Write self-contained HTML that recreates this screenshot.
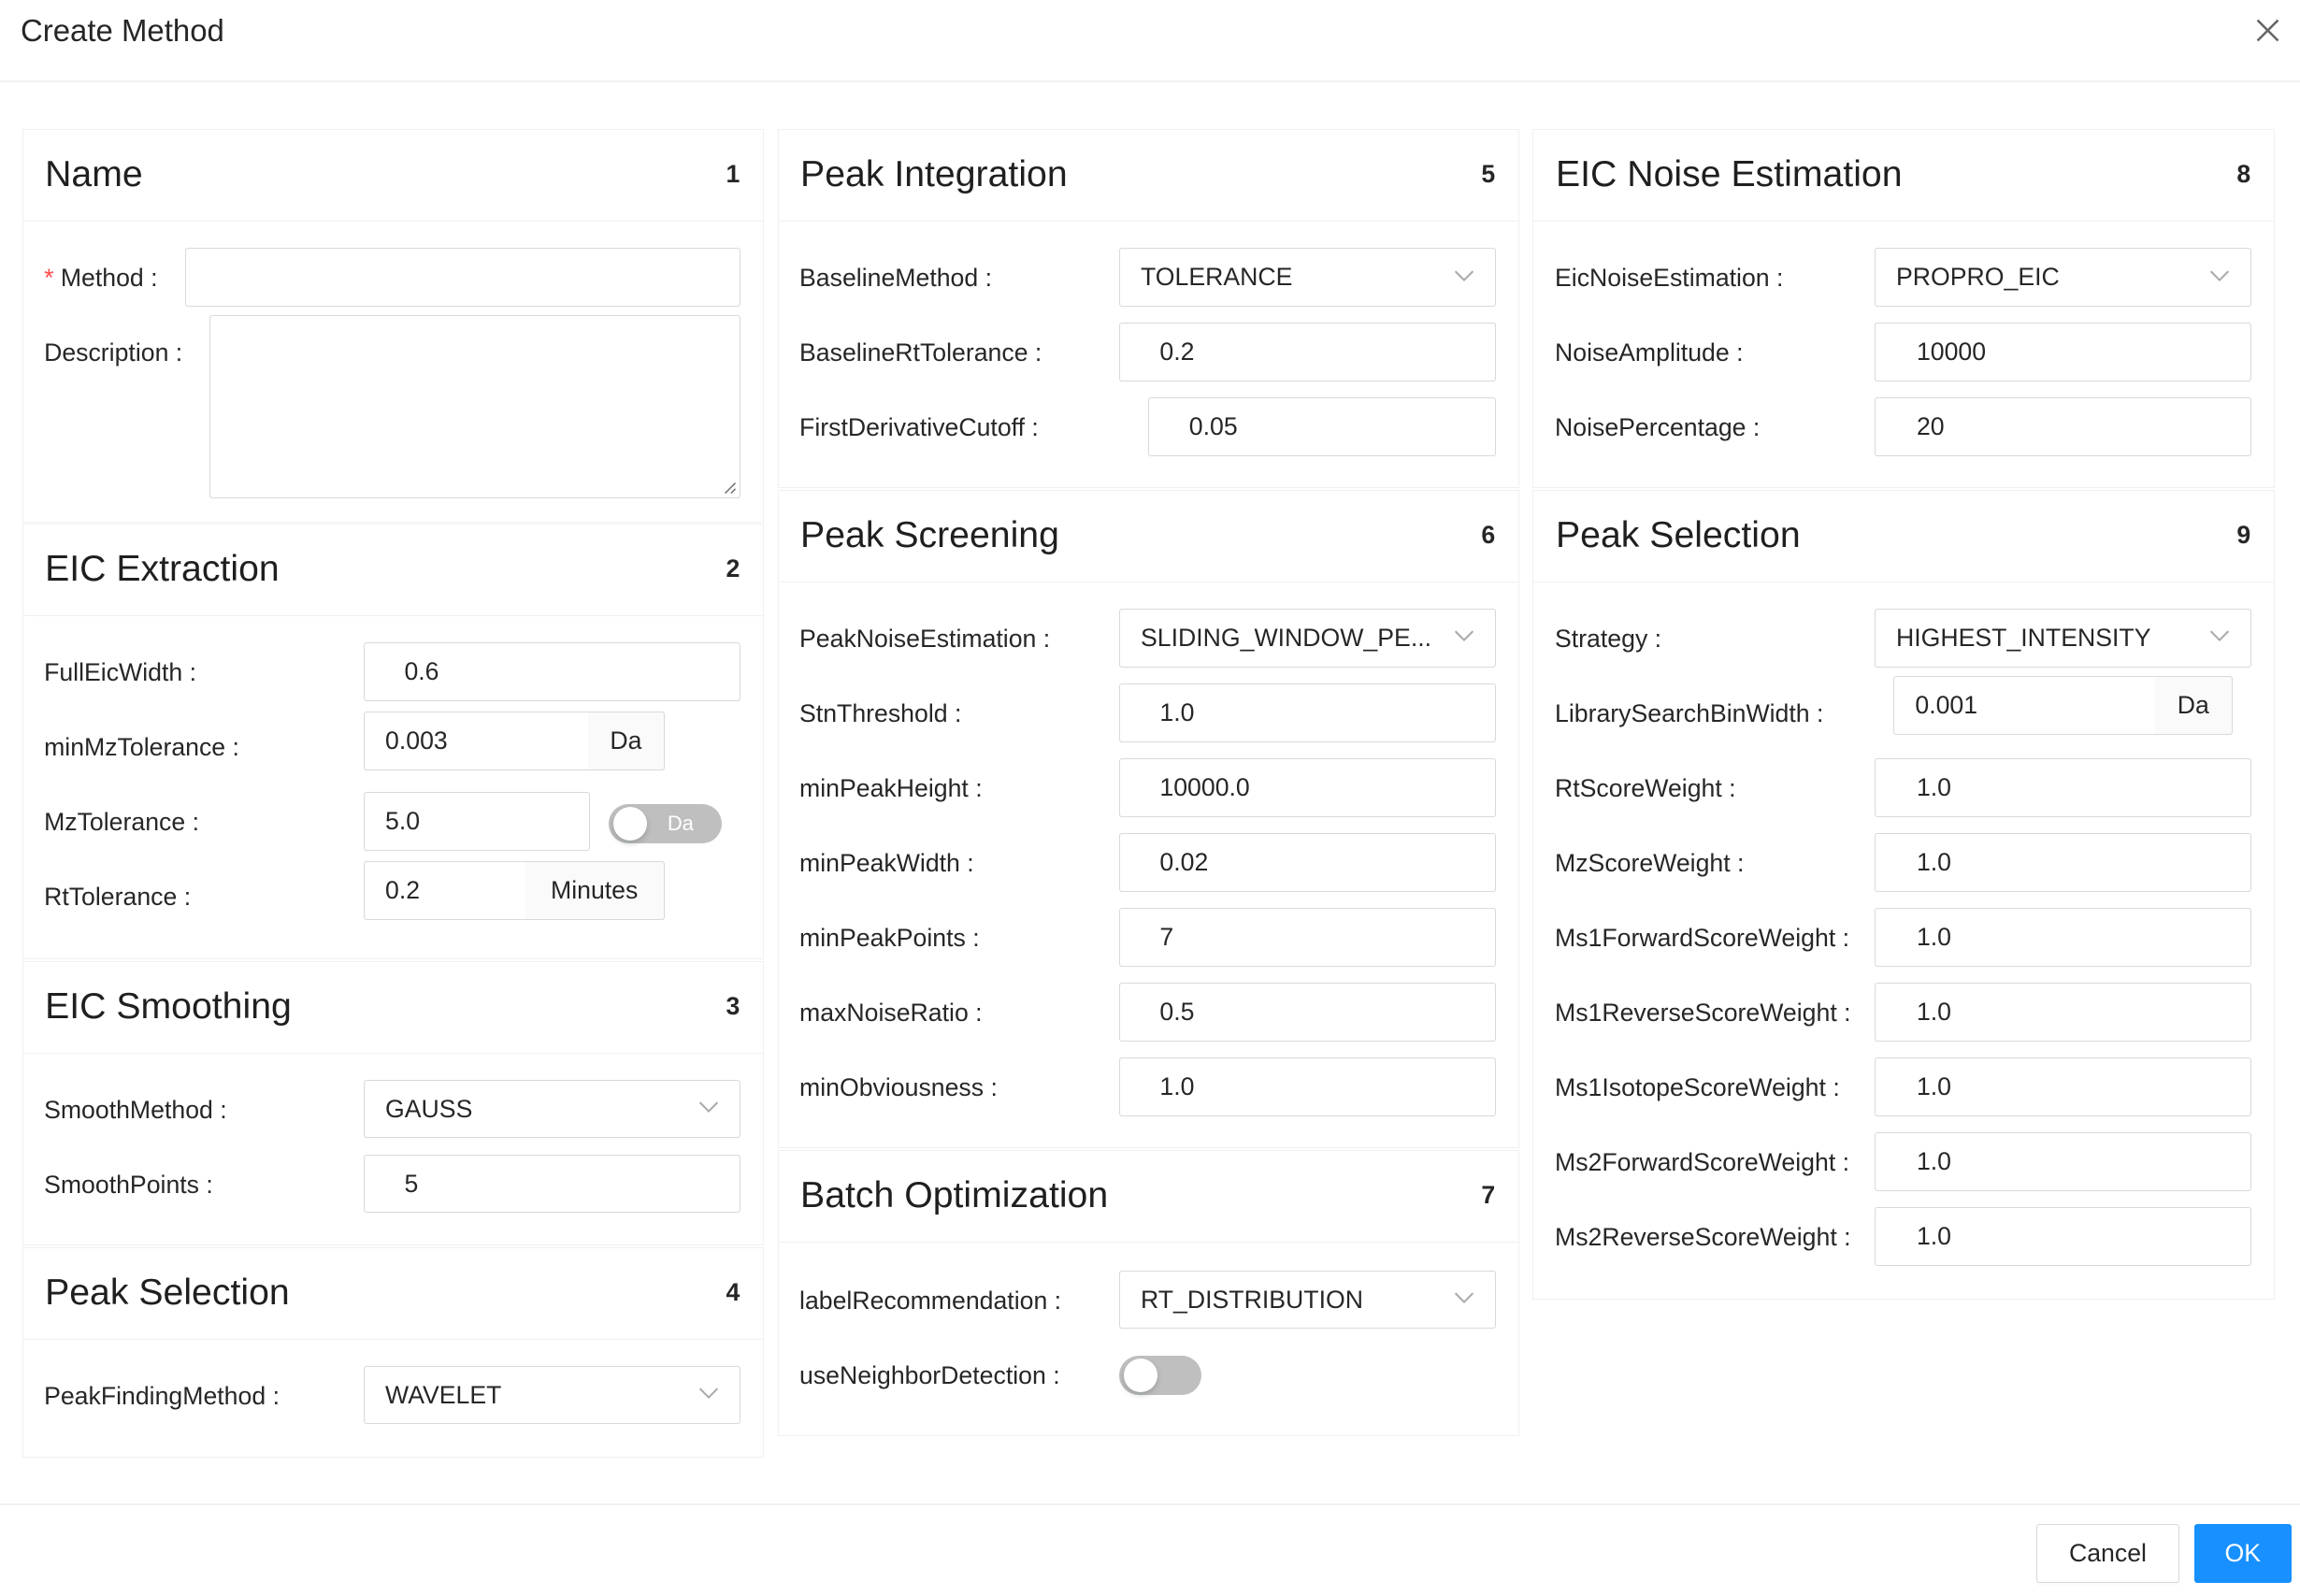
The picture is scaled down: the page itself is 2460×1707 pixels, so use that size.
<!DOCTYPE html>
<html><head><meta charset="utf-8">
<style>
html,body{margin:0;padding:0;background:#fff;}
body{width:2460px;height:1706px;overflow:hidden;}
#root{position:relative;width:1568px;height:1088px;zoom:1.56888;font-family:"Liberation Sans",Arial,sans-serif;color:rgba(0,0,0,.85);}
.a{position:absolute;}
.card{position:absolute;border:1px solid #f0f0f0;box-sizing:border-box;background:#fff;}
.ch{position:absolute;left:0;right:0;top:0;height:62px;border-bottom:1px solid #f0f0f0;}
.ct{position:absolute;left:15px;top:0;line-height:60px;font-size:25px;color:rgba(0,0,0,.88);}
.cn{position:absolute;right:16px;top:0;line-height:60px;font-size:17px;font-weight:bold;}
.lbl{position:absolute;font-size:17px;line-height:41px;white-space:nowrap;}
.in{position:absolute;height:40px;border:1px solid #d9d9d9;border-radius:2px;box-sizing:border-box;font-size:17px;line-height:39px;white-space:nowrap;overflow:hidden;background:#fff;}
.add{position:absolute;height:40px;border:1px solid #d9d9d9;border-left:none;border-radius:0 2px 2px 0;box-sizing:border-box;background:#fafafa;font-size:17px;line-height:39px;text-align:center;}
.sel svg{position:absolute;right:14px;top:13px;}
.btn{position:absolute;height:40px;box-sizing:border-box;border-radius:2px;font-size:17px;line-height:39px;text-align:center;}
</style></head><body><div id="root">

<div class="a" style="left:14px;top:0;line-height:42px;font-size:21px;">Create Method</div>
<svg class="a" style="left:1538px;top:13px" width="16" height="16" viewBox="0 0 16 16"><path d="M1 1L15 15M15 1L1 15" stroke="#666" stroke-width="1.6"/></svg>
<div class="a" style="left:0;right:0;top:55px;height:1px;background:#f0f0f0"></div>

<!-- Column 1 -->
<div class="card" style="left:15px;top:88px;width:506px;height:268px">
  <div class="ch"><div class="ct">Name</div><div class="cn">1</div></div>
</div>
<div class="lbl" style="left:30px;top:169px"><span style="color:#ff4d4f">* </span>Method :</div>
<div class="in" style="left:126px;top:169px;width:379px"></div>
<div class="lbl" style="left:30px;top:220px">Description :</div>
<div class="in" style="left:143px;top:215px;width:362px;height:125px"><svg class="a" style="right:2px;bottom:2px" width="9" height="9" viewBox="0 0 9 9"><path d="M8 1L1 8M8 5L5 8" stroke="#777" stroke-width="1"/></svg></div>

<div class="card" style="left:15px;top:357px;width:506px;height:297px">
  <div class="ch"><div class="ct">EIC Extraction</div><div class="cn">2</div></div>
</div>
<div class="lbl" style="left:30px;top:438px">FullEicWidth :</div>
<div class="in" style="left:248px;top:438px;width:257px;padding-left:27px">0.6</div>
<div class="lbl" style="left:30px;top:489px">minMzTolerance :</div>
<div class="in" style="left:248px;top:485px;width:154px;padding-left:14px;border-radius:2px 0 0 2px">0.003</div>
<div class="add" style="left:401px;top:485px;width:52px">Da</div>
<div class="lbl" style="left:30px;top:540px">MzTolerance :</div>
<div class="in" style="left:248px;top:540px;width:154px;padding-left:14px">5.0</div>
<div class="a" style="left:415px;top:548px;width:77px;height:27px;border-radius:14px;background:#bfbfbf">
  <div class="a" style="left:3px;top:2px;width:23px;height:23px;border-radius:50%;background:#fff;box-shadow:0 2px 4px rgba(0,35,11,.2)"></div>
  <div class="a" style="left:40px;top:0;line-height:27px;font-size:14px;color:#fff">Da</div>
</div>
<div class="lbl" style="left:30px;top:591px">RtTolerance :</div>
<div class="in" style="left:248px;top:587px;width:111px;padding-left:14px;border-radius:2px 0 0 2px">0.2</div>
<div class="add" style="left:358px;top:587px;width:95px">Minutes</div>

<div class="card" style="left:15px;top:655px;width:506px;height:194px">
  <div class="ch"><div class="ct">EIC Smoothing</div><div class="cn">3</div></div>
</div>
<div class="lbl" style="left:30px;top:736px">SmoothMethod :</div>
<div class="in sel" style="left:248px;top:736px;width:257px;padding-left:14px">GAUSS<svg width="14" height="10" viewBox="0 0 14 10"><path d="M1 2L7 8L13 2" stroke="#aaa" stroke-width="1.3" fill="none"/></svg></div>
<div class="lbl" style="left:30px;top:787px">SmoothPoints :</div>
<div class="in" style="left:248px;top:787px;width:257px;padding-left:27px">5</div>

<div class="card" style="left:15px;top:850px;width:506px;height:144px">
  <div class="ch"><div class="ct">Peak Selection</div><div class="cn">4</div></div>
</div>
<div class="lbl" style="left:30px;top:931px">PeakFindingMethod :</div>
<div class="in sel" style="left:248px;top:931px;width:257px;padding-left:14px">WAVELET<svg width="14" height="10" viewBox="0 0 14 10"><path d="M1 2L7 8L13 2" stroke="#aaa" stroke-width="1.3" fill="none"/></svg></div>

<!-- Column 2 -->
<div class="card" style="left:530px;top:88px;width:506px;height:245px">
  <div class="ch"><div class="ct">Peak Integration</div><div class="cn">5</div></div>
</div>
<div class="lbl" style="left:545px;top:169px">BaselineMethod :</div>
<div class="in sel" style="left:763px;top:169px;width:257px;padding-left:14px">TOLERANCE<svg width="14" height="10" viewBox="0 0 14 10"><path d="M1 2L7 8L13 2" stroke="#aaa" stroke-width="1.3" fill="none"/></svg></div>
<div class="lbl" style="left:545px;top:220px">BaselineRtTolerance :</div>
<div class="in" style="left:763px;top:220px;width:257px;padding-left:27px">0.2</div>
<div class="lbl" style="left:545px;top:271px">FirstDerivativeCutoff :</div>
<div class="in" style="left:783px;top:271px;width:237px;padding-left:27px">0.05</div>

<div class="card" style="left:530px;top:334px;width:506px;height:449px">
  <div class="ch"><div class="ct">Peak Screening</div><div class="cn">6</div></div>
</div>
<div class="lbl" style="left:545px;top:415px">PeakNoiseEstimation :</div>
<div class="in sel" style="left:763px;top:415px;width:257px;padding-left:14px">SLIDING_WINDOW_PE...<svg width="14" height="10" viewBox="0 0 14 10"><path d="M1 2L7 8L13 2" stroke="#aaa" stroke-width="1.3" fill="none"/></svg></div>
<div class="lbl" style="left:545px;top:466px">StnThreshold :</div>
<div class="in" style="left:763px;top:466px;width:257px;padding-left:27px">1.0</div>
<div class="lbl" style="left:545px;top:517px">minPeakHeight :</div>
<div class="in" style="left:763px;top:517px;width:257px;padding-left:27px">10000.0</div>
<div class="lbl" style="left:545px;top:568px">minPeakWidth :</div>
<div class="in" style="left:763px;top:568px;width:257px;padding-left:27px">0.02</div>
<div class="lbl" style="left:545px;top:619px">minPeakPoints :</div>
<div class="in" style="left:763px;top:619px;width:257px;padding-left:27px">7</div>
<div class="lbl" style="left:545px;top:670px">maxNoiseRatio :</div>
<div class="in" style="left:763px;top:670px;width:257px;padding-left:27px">0.5</div>
<div class="lbl" style="left:545px;top:721px">minObviousness :</div>
<div class="in" style="left:763px;top:721px;width:257px;padding-left:27px">1.0</div>

<div class="card" style="left:530px;top:784px;width:506px;height:195px">
  <div class="ch"><div class="ct">Batch Optimization</div><div class="cn">7</div></div>
</div>
<div class="lbl" style="left:545px;top:866px">labelRecommendation :</div>
<div class="in sel" style="left:763px;top:866px;width:257px;padding-left:14px">RT_DISTRIBUTION<svg width="14" height="10" viewBox="0 0 14 10"><path d="M1 2L7 8L13 2" stroke="#aaa" stroke-width="1.3" fill="none"/></svg></div>
<div class="lbl" style="left:545px;top:917px">useNeighborDetection :</div>
<div class="a" style="left:763px;top:924px;width:56px;height:27px;border-radius:14px;background:#bfbfbf">
  <div class="a" style="left:3px;top:2px;width:23px;height:23px;border-radius:50%;background:#fff;box-shadow:0 2px 4px rgba(0,35,11,.2)"></div>
</div>

<!-- Column 3 -->
<div class="card" style="left:1045px;top:88px;width:506px;height:245px">
  <div class="ch"><div class="ct">EIC Noise Estimation</div><div class="cn">8</div></div>
</div>
<div class="lbl" style="left:1060px;top:169px">EicNoiseEstimation :</div>
<div class="in sel" style="left:1278px;top:169px;width:257px;padding-left:14px">PROPRO_EIC<svg width="14" height="10" viewBox="0 0 14 10"><path d="M1 2L7 8L13 2" stroke="#aaa" stroke-width="1.3" fill="none"/></svg></div>
<div class="lbl" style="left:1060px;top:220px">NoiseAmplitude :</div>
<div class="in" style="left:1278px;top:220px;width:257px;padding-left:28px">10000</div>
<div class="lbl" style="left:1060px;top:271px">NoisePercentage :</div>
<div class="in" style="left:1278px;top:271px;width:257px;padding-left:28px">20</div>

<div class="card" style="left:1045px;top:334px;width:506px;height:552px">
  <div class="ch"><div class="ct">Peak Selection</div><div class="cn">9</div></div>
</div>
<div class="lbl" style="left:1060px;top:415px">Strategy :</div>
<div class="in sel" style="left:1278px;top:415px;width:257px;padding-left:14px">HIGHEST_INTENSITY<svg width="14" height="10" viewBox="0 0 14 10"><path d="M1 2L7 8L13 2" stroke="#aaa" stroke-width="1.3" fill="none"/></svg></div>
<div class="lbl" style="left:1060px;top:466px">LibrarySearchBinWidth :</div>
<div class="in" style="left:1291px;top:461px;width:179px;padding-left:14px;border-radius:2px 0 0 2px">0.001</div>
<div class="add" style="left:1469px;top:461px;width:53px">Da</div>
<div class="lbl" style="left:1060px;top:517px">RtScoreWeight :</div>
<div class="in" style="left:1278px;top:517px;width:257px;padding-left:28px">1.0</div>
<div class="lbl" style="left:1060px;top:568px">MzScoreWeight :</div>
<div class="in" style="left:1278px;top:568px;width:257px;padding-left:28px">1.0</div>
<div class="lbl" style="left:1060px;top:619px">Ms1ForwardScoreWeight :</div>
<div class="in" style="left:1278px;top:619px;width:257px;padding-left:28px">1.0</div>
<div class="lbl" style="left:1060px;top:670px">Ms1ReverseScoreWeight :</div>
<div class="in" style="left:1278px;top:670px;width:257px;padding-left:28px">1.0</div>
<div class="lbl" style="left:1060px;top:721px">Ms1IsotopeScoreWeight :</div>
<div class="in" style="left:1278px;top:721px;width:257px;padding-left:28px">1.0</div>
<div class="lbl" style="left:1060px;top:772px">Ms2ForwardScoreWeight :</div>
<div class="in" style="left:1278px;top:772px;width:257px;padding-left:28px">1.0</div>
<div class="lbl" style="left:1060px;top:823px">Ms2ReverseScoreWeight :</div>
<div class="in" style="left:1278px;top:823px;width:257px;padding-left:28px">1.0</div>

<!-- Footer -->
<div class="a" style="left:0;right:0;top:1025px;height:1px;background:#f0f0f0"></div>
<div class="btn" style="left:1388px;top:1039px;width:98px;border:1px solid #d9d9d9;background:#fff;box-shadow:0 2px 0 rgba(0,0,0,.016)">Cancel</div>
<div class="btn" style="left:1496px;top:1039px;width:66px;background:#1890ff;color:#fff;border:1px solid #1890ff">OK</div>

</div></body></html>
